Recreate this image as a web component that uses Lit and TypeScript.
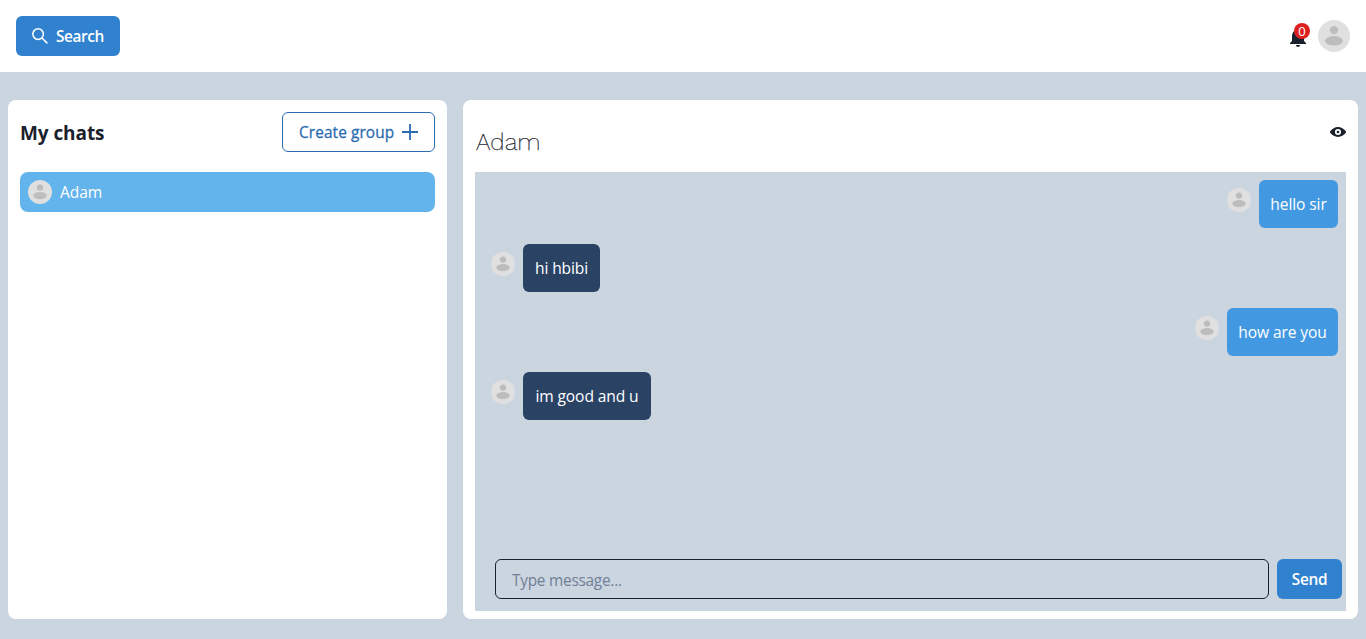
import { LitElement, html, css, svg } from "lit";
import { customElement, property } from "lit/decorators.js";

interface Message {
  text: string;
  mine: boolean;
  width: number;
}

const messages: Message[] = [
  { text: "hello sir", mine: true, width: 79 },
  { text: "hi hbibi", mine: false, width: 77 },
  { text: "how are you", mine: true, width: 111 },
  { text: "im good and u", mine: false, width: 128 },
];

@customElement("user-avatar")
export class UserAvatar extends LitElement {
  @property({ type: Number }) size = 24;
  static styles = css`
    :host { display: block; flex: none; }
    svg { display: block; }
  `;
  render() {
    return html`<svg width=${this.size} height=${this.size} viewBox="0 0 32 32">
      ${svg`<circle cx="16" cy="16" r="16" fill="#e0e0e0"/>
      <circle cx="16" cy="10.1" r="4.2" fill="#bdbdbd"/>
      <ellipse cx="16" cy="20.8" rx="9" ry="4.8" fill="#bdbdbd"/>`}
    </svg>`;
  }
}

@customElement("app-root")
export class AppRoot extends LitElement {
  static styles = css`
    :host {
      display: flex; flex-direction: column; height: 639px; box-sizing: border-box;
      background: #cbd5e0; color: #1a202c;
      font: 400 15.6px/24px "Segoe UI", "Open Sans", "Noto Sans", sans-serif;
      letter-spacing: -0.12px;
    }
    * { box-sizing: border-box; }
    svg { display: block; flex: none; }
    header {
      display: flex; align-items: center; justify-content: space-between;
      height: 72px; padding: 0 16px; background: #fff; flex: none;
    }
    button {
      display: flex; align-items: center; justify-content: flex-start; height: 40px;
      border: 0; border-radius: 6px; margin: 0; padding: 0 16px;
      font: inherit; font-size: 15.4px; font-weight: 600; white-space: nowrap;
      background: #3182ce; color: #fff; flex: none;
    }
    button span { padding-top: 2px; }
    .search { width: 104px; gap: 8px; letter-spacing: -0.4px; }
    .tools { display: flex; align-items: center; gap: 8px; }
    .bell { position: relative; width: 24px; height: 24px; }
    .bell svg { margin-top: 1px; }
    .count {
      position: absolute; left: 8px; top: -1px; width: 16px; height: 16px;
      border-radius: 50%; background: #dc2020; color: #fff;
      font: 13px/17px "Open Sans", sans-serif; text-align: center; letter-spacing: 0;
    }
    main { display: flex; gap: 16px; padding: 28px 8px 20px; flex: 1; min-height: 0; }
    .panel { background: #fff; border-radius: 8px; padding: 12px; }
    .chats { width: 439px; flex: none; }
    .top { display: flex; justify-content: space-between; align-items: center; }
    h1 { margin: 0; font-size: 19px; line-height: 30px; font-weight: 700; letter-spacing: -0.08px; padding-top: 2px; }
    .create {
      width: 153px; justify-content: space-between; background: #fff; color: #2b6cb0;
      border: 1px solid #2b6cb0; letter-spacing: 0.1px; font-weight: 500;
      -webkit-text-stroke: 0.3px #2b6cb0;
    }
    .chat {
      display: flex; align-items: center; gap: 8px; height: 40px; margin-top: 20px;
      padding: 0 8px; border-radius: 8px; background: #63b3ed; color: #fff;
    }
    .room { flex: 1; min-width: 0; display: flex; flex-direction: column; padding-bottom: 8px; }
    .title { display: flex; justify-content: space-between; height: 60px; flex: none; }
    h2 {
      margin: 12px 0 0 1px; font: 200 24px/36px "Work Sans", "Inter", sans-serif;
      letter-spacing: 0.1px; -webkit-text-stroke: 0.25px #1a202c;
    }
    .title svg { margin-top: 12px; }
    .feed { flex: 1; min-height: 0; display: flex; flex-direction: column; background: #cbd5e0; padding: 8px 4px 12px 16px; }
    .row { display: flex; gap: 8px; height: 48px; margin-bottom: 16px; padding-right: 4px; flex: none; }
    .row.mine { justify-content: flex-end; }
    .row user-avatar { margin-top: 8px; }
    .bubble { padding: 12px 0; text-align: center; border-radius: 6px; background: #2a4365; color: #fff; white-space: nowrap; }
    .mine .bubble { background: #4299e1; }
    form { display: flex; gap: 8px; margin: auto 0 0 4px; }
    input {
      flex: 1; min-width: 0; height: 40px; border: 1px solid #1a202c; border-radius: 6px;
      background: transparent; padding: 2px 16px 0 16px; font: inherit; font-size: 15.4px; letter-spacing: -0.25px;
    }
    input::placeholder { color: #718096; opacity: 1; }
    .send { width: 65px; padding: 0; justify-content: center; letter-spacing: -0.3px; }
  `;

  render() {
    return html`
      <header>
        <button class="search">
          <svg width="16" height="16" viewBox="0 0 16 16" fill="none" stroke="#fff" stroke-width="1.5">
            <circle cx="6.1" cy="6.1" r="5.3" /><path d="M10 10L15.4 15.4" />
          </svg>
          <span>Search</span>
        </button>
        <div class="tools">
          <div class="bell">
            <svg width="24" height="24" viewBox="0 0 24 24" fill="#1a202c">
              <path d="M12 22c1.1 0 2-.9 2-2h-4c0 1.1.89 2 2 2zm6-6v-5c0-3.07-1.64-5.64-4.5-6.32V4c0-.83-.67-1.5-1.5-1.5s-1.5.67-1.5 1.5v.68C7.63 5.36 6 7.92 6 11v5l-2 2v1h16v-1l-2-2z" />
            </svg>
            <span class="count">0</span>
          </div>
          <user-avatar .size=${32}></user-avatar>
        </div>
      </header>
      <main>
        <section class="panel chats">
          <div class="top">
            <h1>My chats</h1>
            <button class="create">
              <span>Create group</span>
              <svg width="16" height="16" viewBox="0 0 16 16" stroke="#2b6cb0" stroke-width="1.8"><path d="M8 0V16M0 8H16" /></svg>
            </button>
          </div>
          <div class="chat"><user-avatar></user-avatar><span>Adam</span></div>
        </section>
        <section class="panel room">
          <div class="title">
            <h2>Adam</h2>
            <svg width="16" height="16" viewBox="0 0 24 24" fill="#1a202c">
              <path d="M23.432,10.524C20.787,7.614,16.4,4.538,12,4.6,7.6,4.537,3.213,7.615.568,10.524a2.211,2.211,0,0,0,0,2.948C3.182,16.351,7.507,19.4,11.839,19.4h.308c4.347,0,8.671-3.049,11.288-5.929A2.21,2.21,0,0,0,23.432,10.524ZM7.4,12A4.6,4.6,0,1,1,12,16.6,4.6,4.6,0,0,1,7.4,12Z" />
              <circle cx="12" cy="12" r="2" />
            </svg>
          </div>
          <div class="feed">
            ${messages.map(
              (m) => html`<div class="row ${m.mine ? "mine" : ""}">
                <user-avatar></user-avatar><div class="bubble" style="width:${m.width}px">${m.text}</div>
              </div>`
            )}
            <form>
              <input placeholder="Type message..." />
              <button class="send" type="button"><span>Send</span></button>
            </form>
          </div>
        </section>
      </main>
    `;
  }
}
